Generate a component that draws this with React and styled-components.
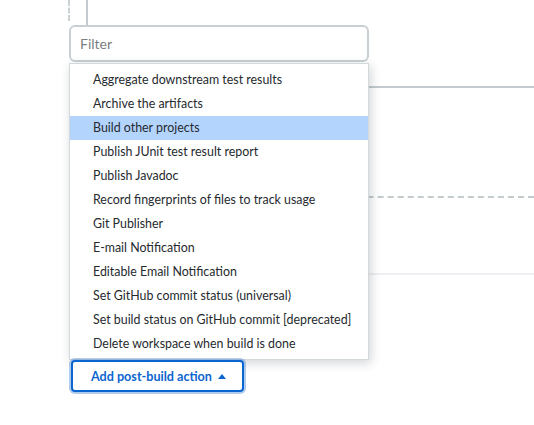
import React from 'react';
import styled, { createGlobalStyle } from 'styled-components';

const GlobalStyle = createGlobalStyle`
  html, body {
    margin: 0;
    padding: 0;
    background: #fff;
  }
  body {
    font-family: Lato, "Noto Sans", sans-serif;
    color: #1f2328;
  }
`;

const Page = styled.div`
  position: relative;
  width: 534px;
  height: 425px;
  overflow: hidden;
  background: #fff;
`;

const Rails = styled.div`
  display: flex;
  height: 25px;
  margin-left: 68px;
`;

const DashedRail = styled.div`
  width: 0;
  height: 21px;
  border-left: 2px dashed #c9d1d5;
`;

const SolidRail = styled.div`
  width: 2px;
  margin-left: 16px;
  background: #c3cbcf;
`;

const FilterInput = styled.input`
  display: block;
  box-sizing: border-box;
  width: 300px;
  height: 37px;
  margin-left: 69px;
  padding: 0 9px;
  border: 2px solid #c8d0d4;
  border-radius: 6px;
  font-family: inherit;
  font-size: 14px;
  color: #1f2328;
  outline: none;
  &::placeholder {
    color: #7b7f83;
  }
`;

const Divider = styled.div`
  height: 0;
  margin-left: 87px;
  border-top: 2px ${p => p.$dashed ? 'dashed' : 'solid'} ${p => p.$color || '#c3cbcf'};
  margin-top: ${p => p.$gap}px;
`;

const Menu = styled.ul`
  position: absolute;
  top: 63px;
  left: 69px;
  box-sizing: border-box;
  width: 300px;
  margin: 0;
  padding: 4px 0 3px;
  list-style: none;
  background: #fff;
  border: 1px solid #d3d8db;
  box-shadow: 2px 3px 10px rgba(30, 40, 50, 0.2);
`;

const MenuItem = styled.li`
  height: 24px;
  line-height: 24px;
  padding-left: 23px;
  font-size: 12.4px;
  color: #262a2e;
  white-space: nowrap;
  background: ${p => p.$active ? '#b3d4fd' : 'transparent'};
`;

const ButtonRow = styled.div`
  position: absolute;
  top: 360px;
  left: 71px;
`;

const ActionButton = styled.button`
  display: flex;
  align-items: center;
  gap: 6px;
  box-sizing: border-box;
  height: 32px;
  padding: 0 16px 0 18px;
  border: 2px solid #0b66d0;
  border-radius: 4px;
  background: #fff;
  color: #0b66d0;
  font-family: inherit;
  font-size: 12.6px;
  font-weight: 700;
  box-shadow: 0 0 0 2px rgba(80, 140, 210, 0.45);
  cursor: pointer;
`;

const Caret = () => (
  <svg width="8" height="5" viewBox="0 0 8 5">
    <path d="M0 5 L4 0 L8 5 Z" fill="currentColor" />
  </svg>
);

const actions = [
  'Aggregate downstream test results',
  'Archive the artifacts',
  'Build other projects',
  'Publish JUnit test result report',
  'Publish Javadoc',
  'Record fingerprints of files to track usage',
  'Git Publisher',
  'E-mail Notification',
  'Editable Email Notification',
  'Set GitHub commit status (universal)',
  'Set build status on GitHub commit [deprecated]',
  'Delete workspace when build is done',
];

export default function App() {
  return (
    <Page>
      <GlobalStyle />
      <Rails>
        <DashedRail />
        <SolidRail />
      </Rails>
      <FilterInput placeholder="Filter" />
      <Divider $gap={24} />
      <Divider $gap={108} $dashed />
      <Divider $gap={75} $color="#eef0f3" />
      <Menu>
        {actions.map((a, i) => (
          <MenuItem key={a} $active={i === 2}>{a}</MenuItem>
        ))}
      </Menu>
      <ButtonRow>
        <ActionButton>
          Add post-build action
          <Caret />
        </ActionButton>
      </ButtonRow>
    </Page>
  );
}
